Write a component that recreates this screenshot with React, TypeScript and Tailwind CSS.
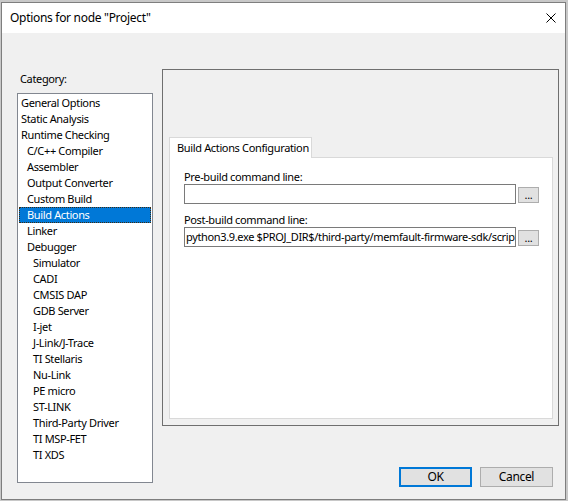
const categories: { label: string; level: number }[] = [
  { label: "General Options", level: 0 },
  { label: "Static Analysis", level: 0 },
  { label: "Runtime Checking", level: 0 },
  { label: "C/C++ Compiler", level: 1 },
  { label: "Assembler", level: 1 },
  { label: "Output Converter", level: 1 },
  { label: "Custom Build", level: 1 },
  { label: "Build Actions", level: 1 },
  { label: "Linker", level: 1 },
  { label: "Debugger", level: 1 },
  { label: "Simulator", level: 2 },
  { label: "CADI", level: 2 },
  { label: "CMSIS DAP", level: 2 },
  { label: "GDB Server", level: 2 },
  { label: "I-jet", level: 2 },
  { label: "J-Link/J-Trace", level: 2 },
  { label: "TI Stellaris", level: 2 },
  { label: "Nu-Link", level: 2 },
  { label: "PE micro", level: 2 },
  { label: "ST-LINK", level: 2 },
  { label: "Third-Party Driver", level: 2 },
  { label: "TI MSP-FET", level: 2 },
  { label: "TI XDS", level: 2 },
];

const indent = ["pl-[2px]", "pl-[8px]", "pl-[14px]"];

const CommandField = ({ label, value }: { label: string; value: string }) => (
  <div className="flex flex-col">
    <div className="leading-[14px] text-black">{label}</div>
    <div className="flex items-end gap-[2px]">
      <div className="h-[20px] w-[332px] overflow-hidden whitespace-nowrap border border-[#7a7a7a] bg-white pl-[1px] leading-[18px] text-black">
        {value}
      </div>
      <div className="mb-[1px] flex h-[16px] w-[21px] items-end justify-center border border-[#adadad] bg-[#e1e1e1] pb-[2px] text-[11px] leading-[11px] text-black">
        ...
      </div>
    </div>
  </div>
);

export default function App() {
  return (
    <div className="h-[501px] w-[568px] overflow-hidden bg-[#c8c8c8] pl-[1px] pt-[2px] font-['Noto_Sans',sans-serif] text-[11px] tracking-[-0.35px]">
      <div className="flex h-[498px] w-[565px] flex-col border border-[#7e7e7e] bg-[#f0f0f0]">
        {/* title bar */}
        <div className="flex h-[30px] items-center justify-between bg-white pl-[8px] pr-[8px]">
          <span className="text-[12px] tracking-[-0.3px] text-black">Options for node "Project"</span>
          <svg width="10" height="10" viewBox="0 0 10 10" className="mr-[1px]">
            <path d="M0.5 0.5 L9.5 9.5 M9.5 0.5 L0.5 9.5" stroke="#000" strokeWidth="1" fill="none" />
          </svg>
        </div>

        <div className="flex items-start">
          {/* category column */}
          <div className="ml-[15px] flex flex-col">
            <div className="mt-[38px] pl-[3px] leading-[16px] text-black">Category:</div>
            <div className="mt-[6px] h-[390px] w-[136px] border border-[#828790] bg-white px-[1px] pt-[1px]">
              {categories.map((c) =>
                c.label === "Build Actions" ? (
                  <div
                    key={c.label}
                    className={`h-[16px] border border-dotted border-[#3b2a10] bg-[#0078d7] leading-[14px] text-white ${indent[c.level]}`}
                  >
                    <span className="-ml-[1px]">{c.label}</span>
                  </div>
                ) : (
                  <div key={c.label} className={`h-[16px] leading-[16px] text-black ${indent[c.level]}`}>
                    {c.label}
                  </div>
                )
              )}
            </div>
          </div>

          {/* options panel */}
          <div className="ml-[9px] mt-[36px] flex flex-col">
            <div className="flex h-[357px] w-[397px] flex-col border border-[#6f6f6f] pl-[6px] pt-[67px]">
              <div className="relative z-10 -mb-[1px] h-[21px] w-[143px] border border-b-0 border-[#d9d9d9] bg-white pl-[7px] leading-[19px] text-black">
                Build Actions Configuration
              </div>
              <div className="flex h-[262px] w-[384px] flex-col border border-[#d9d9d9] bg-white pl-[14px] pt-[12px]">
                <CommandField label="Pre-build command line:" value="" />
                <div className="mt-[9px]">
                  <CommandField
                    label="Post-build command line:"
                    value="python3.9.exe $PROJ_DIR$/third-party/memfault-firmware-sdk/scripts"
                  />
                </div>
              </div>
            </div>

            <div className="mt-[41px] flex justify-end gap-[8px] pr-[6px]">
              <div className="flex h-[20px] w-[73px] items-center justify-center border-2 border-[#0078d7] bg-[#e1e1e1] text-[12px] text-black">
                OK
              </div>
              <div className="flex h-[20px] w-[73px] items-center justify-center border border-[#adadad] bg-[#e1e1e1] text-[12px] text-black">
                Cancel
              </div>
            </div>
          </div>
        </div>
      </div>
    </div>
  );
}
